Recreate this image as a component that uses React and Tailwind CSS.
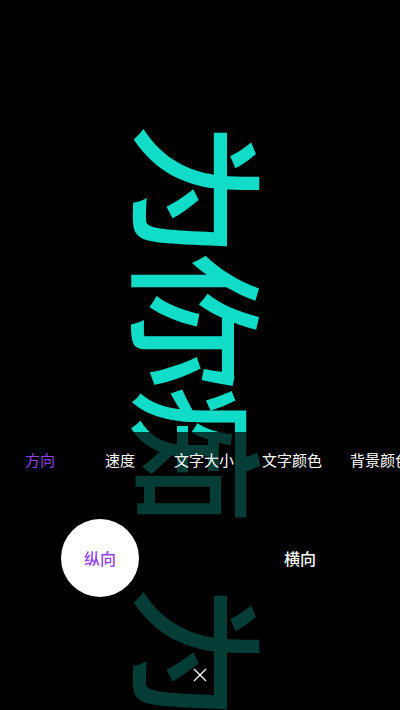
import React, { useState } from 'react'

const TABS = ['方向', '速度', '文字大小', '文字颜色', '背景颜色']
const CJK = { fontFamily: '"Noto Sans CJK SC", "Noto Sans", sans-serif' }

const App = () => {
  const [tab, setTab] = useState(0)
  const [dir, setDir] = useState('v')

  return (
    <div className="relative w-[400px] h-[710px] bg-black overflow-hidden" style={CJK}>
      {/* marquee text */}
      <div className="absolute inset-0 flex justify-center pt-[122px] pl-[4px]">
        <div className="[writing-mode:vertical-rl] [text-orientation:sideways] whitespace-nowrap text-[137px] tracking-[-5px] leading-none text-[#10dcc8] font-medium">
          <span className="pb-[67px]">为你痴</span>
          <span>为你痴</span>
        </div>
      </div>

      {/* settings panel */}
      <div className="absolute left-0 right-0 bottom-0 h-[278px] bg-black/[0.73] flex flex-col">
        <div className="flex h-14 items-center whitespace-nowrap">
          {TABS.map((t, i) => (
            <button
              key={t}
              onClick={() => setTab(i)}
              className={`shrink-0 min-w-[80px] px-[14px] text-center text-[15px] ${i === tab ? 'text-[#8f45ea]' : 'text-white'}`}
            >
              {t}
            </button>
          ))}
        </div>

        <div className="flex mt-[31px] h-[78px]">
          <div className="flex-1 flex items-center justify-center">
            <button
              onClick={() => setDir('v')}
              className={`w-[78px] h-[78px] rounded-full flex items-center justify-center text-[16px] font-medium ${dir === 'v' ? 'bg-white text-[#8f45ea]' : 'text-white'}`}
            >
              纵向
            </button>
          </div>
          <div className="flex-1 flex items-center justify-center">
            <button
              onClick={() => setDir('h')}
              className={`w-[78px] h-[78px] rounded-full flex items-center justify-center text-[16px] font-medium ${dir === 'h' ? 'bg-white text-[#8f45ea]' : 'text-white'}`}
            >
              横向
            </button>
          </div>
        </div>

        <div className="flex justify-center mt-[71px]">
          <svg width="14" height="14" viewBox="0 0 14 14" fill="none" stroke="white" strokeWidth="1.3">
            <path d="M1 1L13 13M13 1L1 13" />
          </svg>
        </div>
      </div>
    </div>
  )
}

export default App
